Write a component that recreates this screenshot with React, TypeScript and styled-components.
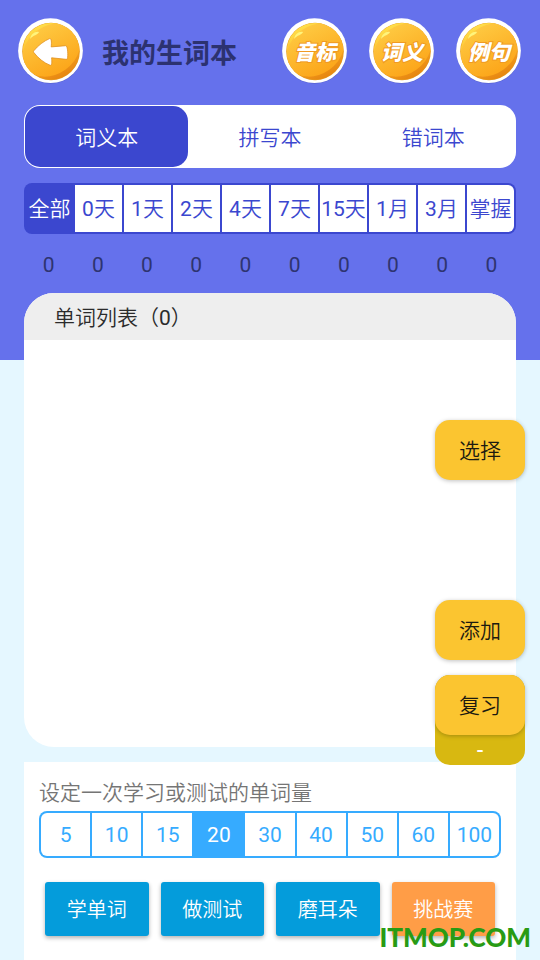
import React, { useId, useState } from "react";
import styled, { createGlobalStyle, css } from "styled-components";

const GlobalStyle = createGlobalStyle`
  *, *::before, *::after { box-sizing: border-box; }
  body {
    margin: 0;
    font-family: Roboto, "Noto Sans CJK SC DemiLight", "Noto Sans CJK SC", sans-serif;
    font-size: 21px;
    line-height: 30px;
    background: #e5f7ff;
  }
  button { font: inherit; margin: 0; padding: 0; border: 0; cursor: pointer; }
`;

const Page = styled.main`
  position: relative;
  display: flex;
  flex-direction: column;
  height: 100vh;
  padding: 0 24px;
  overflow: hidden;
  background: linear-gradient(#6571ec 360px, #e5f7ff 360px);
`;

const Header = styled.header`
  display: flex;
  align-items: center;
  gap: 21px;
  height: 105px;
  margin: 0 -6px;
  padding-bottom: 3px;
`;

const Heading = styled.div`
  display: flex;
  flex: 1;
  align-items: center;
  gap: 18px;
`;

const Title = styled.h1`
  margin: 0;
  padding-top: 2px;
  font-family: "Noto Sans CJK SC", sans-serif;
  font-size: 27px;
  line-height: 40px;
  font-weight: 700;
  color: #2c3270;
`;

const RoundButton = styled.button`
  display: grid;
  place-items: center;
  width: 66px;
  height: 66px;
  border-radius: 50%;
  background: none;
  > * { grid-area: 1 / 1; }
`;

const RoundLabel = styled.span`
  font-family: "Noto Sans CJK SC", sans-serif;
  font-size: 21px;
  line-height: 24px;
  font-weight: 900;
  font-style: italic;
  color: #fff;
  -webkit-text-stroke: 2px #f09a22;
  paint-order: stroke fill;
`;

const Tabs = styled.nav`
  display: flex;
  flex: none;
  height: 63px;
  margin-bottom: 15px;
  padding: 1px;
  border-radius: 16px;
  background: #fff;
`;

const Tab = styled.button<{ $active: boolean }>`
  flex: 1;
  padding-top: 2px;
  border-radius: 15px;
  background: ${(p) => (p.$active ? "#3b47cf" : "transparent")};
  color: ${(p) => (p.$active ? "#fff" : "#3b47cf")};
`;

const Segments = styled.div<{ $color: string; $height: number }>`
  display: flex;
  flex: none;
  gap: 2px;
  height: ${(p) => p.$height}px;
  padding: 2px;
  border-radius: 8px;
  background: ${(p) => p.$color};
  color: ${(p) => p.$color};
`;

const Segment = styled.button<{ $active: boolean }>`
  flex: 1 1 0;
  min-width: 0;
  white-space: nowrap;
  color: inherit;
  background: #fff;
  &:first-child { border-radius: 6px 0 0 6px; }
  &:last-child { border-radius: 0 6px 6px 0; }
  ${(p) =>
    p.$active &&
    css`
      color: #fff;
      background: transparent;
    `}
`;

const Counts = styled.div`
  display: flex;
  flex: none;
  height: 59px;
  padding-top: 2px;
  align-items: center;
  color: #2e3470;
`;

const Count = styled.span`
  flex: 1;
  text-align: center;
`;

const ListCard = styled.section`
  flex: 1;
  border-radius: 30px;
  overflow: hidden;
  background: #fff;
`;

const ListTitle = styled.h2`
  margin: 0;
  padding: 3px 30px 0;
  font-size: 21px;
  font-weight: inherit;
  line-height: 44px;
  color: #2b2b2b;
  background: #eee;
`;

const StudyPanel = styled.section`
  flex: none;
  margin-top: 15px;
  padding: 16px 15px 24px;
  background: #fff;
`;

const PanelLabel = styled.p`
  margin: 0 0 3px;
  color: #757575;
`;

const Actions = styled.div`
  display: flex;
  gap: 12px;
  padding: 24px 6px 0;
`;

const Action = styled.button<{ $color: string }>`
  flex: 1;
  height: 54px;
  padding-top: 2px;
  border-radius: 3px;
  font-size: 20px;
  color: #fff;
  background: ${(p) => p.$color};
  box-shadow: 0 2px 4px rgba(0, 0, 0, 0.3);
`;

const Floating = styled.aside`
  position: absolute;
  right: 15px;
  bottom: 195px;
  width: 90px;
  display: flex;
  flex-direction: column;
  gap: 15px;
`;

const FloatButton = styled.button<{ $spaced?: boolean }>`
  height: 60px;
  margin-bottom: ${(p) => (p.$spaced ? 105 : 0)}px;
  padding-top: 2px;
  border-radius: 15px;
  color: #1c1a10;
  background: #fbc530;
  box-shadow: 0 1px 4px rgba(0, 0, 0, 0.25);
`;

const ReviewBox = styled.div`
  display: flex;
  flex-direction: column;
  border-radius: 15px;
  background: #d8b811;
`;

const ReviewCount = styled.span`
  text-align: center;
  font-weight: 500;
  color: #fff;
`;

const Watermark = styled.span`
  position: absolute;
  right: 9px;
  bottom: 7px;
  font-family: Lato, sans-serif;
  font-size: 26px;
  font-weight: 900;
  line-height: 32px;
  color: #289b14;
`;

function Coin({ arrow }: { arrow?: boolean }) {
  const id = useId();
  return (
    <svg width="66" height="66" viewBox="0 0 66 66" aria-hidden="true">
      <defs>
        <linearGradient id={`${id}f`} x1="0.6" y1="0" x2="0.4" y2="1">
          <stop offset="0" stopColor="#fec840" />
          <stop offset="1" stopColor="#fca61a" />
        </linearGradient>
        <linearGradient id={`${id}r`} x1="0.2" y1="0" x2="0.7" y2="1">
          <stop offset="0" stopColor="#ffe750" />
          <stop offset="0.45" stopColor="#fdb52a" />
          <stop offset="1" stopColor="#e5830f" />
        </linearGradient>
        <clipPath id={`${id}c`}>
          <circle cx="33" cy="33.5" r="28.5" />
        </clipPath>
      </defs>
      <circle cx="32.5" cy="33.4" r="32.3" fill="#4d58bd" opacity="0.6" />
      <circle cx="32.5" cy="32.7" r="32.4" fill="#fff" />
      <circle cx="33" cy="33.5" r="28.8" fill="#e59a20" />
      <circle cx="33" cy="33.3" r="28.3" fill={`url(#${id}r)`} />
      <g clipPath={`url(#${id}c)`}>
        <ellipse cx="33.5" cy="32" rx="31" ry="24" fill={`url(#${id}f)`} transform="rotate(-36 33.5 32)" />
      </g>
      <path d="M12 21C13 16 17 13 21 14C20 17 15 17 12 21Z" fill="#fff47c" />
      {arrow && (
        <path
          d="M15.8 34.5Q15 33.7 15.8 32.8C20 27.5 26 23 31.5 20.6C33.2 20.1 33.8 23 33.2 28.9L47.8 27.7C49.8 27.8 50.2 38 49.4 40.6Q49.2 41.5 48 41.3L33.6 39.8C33.9 44 34.2 47.6 32.2 47.3C26 45 20 40 15.8 34.5Z"
          fill="#fff"
          stroke="#df9120"
          strokeWidth="0.8"
        />
      )}
    </svg>
  );
}

const BOOKS = ["词义本", "拼写本", "错词本"];
const STAGES = ["全部", "0天", "1天", "2天", "4天", "7天", "15天", "1月", "3月", "掌握"];
const AMOUNTS = [5, 10, 15, 20, 30, 40, 50, 60, 100];
const ACTIONS = [
  { label: "学单词", color: "#049cdb" },
  { label: "做测试", color: "#049cdb" },
  { label: "磨耳朵", color: "#049cdb" },
  { label: "挑战赛", color: "#ff9d47" },
];

export default function App() {
  const [book, setBook] = useState(0);
  const [stage, setStage] = useState(0);
  const [amount, setAmount] = useState(20);

  return (
    <>
      <GlobalStyle />
      <Page lang="zh-CN">
        <Header>
          <Heading>
            <RoundButton aria-label="返回">
              <Coin arrow />
            </RoundButton>
            <Title>我的生词本</Title>
          </Heading>
          {["音标", "词义", "例句"].map((t) => (
            <RoundButton key={t}>
              <Coin />
              <RoundLabel>{t}</RoundLabel>
            </RoundButton>
          ))}
        </Header>
        <Tabs>
          {BOOKS.map((t, i) => (
            <Tab key={t} $active={i === book} aria-pressed={i === book} onClick={() => setBook(i)}>
              {t}
            </Tab>
          ))}
        </Tabs>
        <Segments $color="#3b47cf" $height={51} role="group" aria-label="复习阶段">
          {STAGES.map((t, i) => (
            <Segment key={t} $active={i === stage} aria-pressed={i === stage} onClick={() => setStage(i)}>
              {t}
            </Segment>
          ))}
        </Segments>
        <Counts>
          {STAGES.map((t) => (
            <Count key={t}>0</Count>
          ))}
        </Counts>
        <ListCard>
          <ListTitle>单词列表（0）</ListTitle>
        </ListCard>
        <StudyPanel>
          <PanelLabel>设定一次学习或测试的单词量</PanelLabel>
          <Segments $color="#36abff" $height={47} role="group" aria-label="单词量">
            {AMOUNTS.map((n) => (
              <Segment key={n} $active={n === amount} aria-pressed={n === amount} onClick={() => setAmount(n)}>
                {n}
              </Segment>
            ))}
          </Segments>
          <Actions>
            {ACTIONS.map((a) => (
              <Action key={a.label} $color={a.color}>
                {a.label}
              </Action>
            ))}
          </Actions>
        </StudyPanel>
        <Floating>
          <FloatButton $spaced>选择</FloatButton>
          <FloatButton>添加</FloatButton>
          <ReviewBox>
            <FloatButton>复习</FloatButton>
            <ReviewCount>-</ReviewCount>
          </ReviewBox>
        </Floating>
        <Watermark>ITMOP.COM</Watermark>
      </Page>
    </>
  );
}
